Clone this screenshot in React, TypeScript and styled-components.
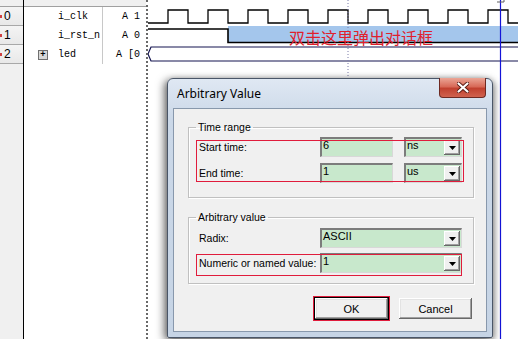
import React from 'react';
import styled, { createGlobalStyle } from 'styled-components';

const GlobalStyle = createGlobalStyle`
  html, body {
    margin: 0;
    padding: 0;
    background: #fff;
    overflow: hidden;
  }
`;

// Waveform viewer
const Page = styled.div`
  position: relative;
  display: flex;
  width: 520px;
  height: 339px;
  overflow: hidden;
  font-family: 'Liberation Sans', Arial, sans-serif;
  background: #fff;
`;

const Gutter = styled.div`
  width: 23px;
  background: #f0f0f0;
  border-right: 1px solid #000;
  display: flex;
  flex-direction: column;
`;

const Header = styled.div`
  height: 6px;
  border-bottom: 1px solid #a0a0a0;
  background: #f0f0f0;
`;

const GutterCell = styled.div`
  position: relative;
  height: 18px;
  border-bottom: 1px solid #a8a8a8;
  display: flex;
  align-items: center;
  padding-left: 4px;
  font-size: 12px;
  color: #000;
  background: linear-gradient(#f4f4f4, #e8e8e8);

  &::before {
    content: '';
    position: absolute;
    left: 0;
    top: 8px;
    width: 2px;
    height: 3px;
    background: #d04040;
  }
`;

const SignalPane = styled.div`
  width: 122px;
  display: flex;
  flex-direction: column;
`;

const SignalRow = styled.div`
  display: grid;
  grid-template-columns: 79px 43px;
  height: 19px;
  font-family: 'Liberation Mono', 'Courier New', monospace;
  font-size: 10px;
  color: #000;
`;

const NameCell = styled.div`
  display: flex;
  align-items: center;
  padding-left: 14px;
  border-right: 1px solid #c8c8c8;
  white-space: pre;
`;

const ExpandBox = styled.span`
  display: inline-flex;
  align-items: center;
  justify-content: center;
  width: 8px;
  height: 8px;
  margin-right: 10px;
  border: 1px solid #707070;
  background: #d8d8d8;
  font-family: 'Liberation Sans', sans-serif;
  font-size: 9px;
  line-height: 1;
  font-weight: bold;
`;

const Spacer = styled.span`
  width: 20px;
`;

const ValueCell = styled.div`
  display: flex;
  align-items: center;
  justify-content: flex-end;
  padding-right: 6px;
  overflow: hidden;
  white-space: pre;
`;

const WaveArea = styled.div`
  flex: 1;
  border-left: 2px dotted #686868;

  svg {
    display: block;
  }
`;

// Dialog
const Dialog = styled.div`
  position: absolute;
  left: 167px;
  top: 78px;
  width: 326px;
  height: 260px;
  box-sizing: border-box;
  display: flex;
  flex-direction: column;
  padding: 0 5px 5px;
  border: 1px solid #4a5668;
  border-radius: 6px 6px 2px 2px;
  background: linear-gradient(#dfe8f3, #cbd8e8 40px, #c6d4e5);
  box-shadow: -3px 2px 8px rgba(0, 0, 0, 0.55), 2px 2px 6px rgba(0, 0, 0, 0.35);
`;

const TitleBar = styled.div`
  position: relative;
  height: 29px;
  display: flex;
  align-items: center;
  padding-left: 4px;
  font-family: 'Noto Sans', 'Open Sans', sans-serif;
  font-size: 12px;
  color: #000;
`;

const CloseButton = styled.div`
  position: absolute;
  right: 1px;
  top: -1px;
  width: 47px;
  height: 20px;
  box-sizing: border-box;
  display: flex;
  align-items: center;
  justify-content: center;
  border: 1px solid #6e2a22;
  border-top: none;
  border-radius: 0 0 4px 4px;
  background: linear-gradient(#eba696, #d86a58 45%, #c1412f 55%, #d0624e);
`;

const Client = styled.div`
  position: relative;
  flex: 1;
  display: flex;
  flex-direction: column;
  padding: 12px 12px 0 14px;
  border: 1px solid #8898ac;
  background: #f0f0f0;
  font-size: 10.5px;
  color: #000;
`;

const GroupBox = styled.fieldset<{ $top: number; $bottom: number; $gap: number }>`
  margin: 0 0 ${(p) => p.$gap}px;
  padding: ${(p) => p.$top}px 10px ${(p) => p.$bottom}px;
  border: 1px solid #c0c0c0;
  box-shadow: inset 1px 1px 0 #fff, 1px 1px 0 #fff;
  display: grid;
  grid-template-columns: 121px 84px 58px;
  row-gap: ${(p) => (p.$top > 4 ? 5 : 6)}px;
`;

const Legend = styled.legend`
  margin-left: -3px;
  padding: 0 2px;
  font-size: 10.5px;
  line-height: 12px;
`;

const Label = styled.div`
  display: flex;
  align-items: center;
  height: 20px;
`;

const Field = styled.div<{ $span?: boolean; $width?: number }>`
  position: relative;
  width: ${(p) => (p.$width ? `${p.$width}px` : 'auto')};
  height: 20px;
  box-sizing: border-box;
  grid-column: ${(p) => (p.$span ? '2 / 4' : 'auto')};
  border-top: 2px solid #7c7c7c;
  border-left: 2px solid #7c7c7c;
  border-right: 1px solid #d8d8d8;
  border-bottom: 1px solid #d8d8d8;
  background: #c8e8cc;
  padding: 0 1px;
  font-size: 11px;
  line-height: 13px;
`;

const DropButton = styled.div`
  position: absolute;
  right: 1px;
  top: 1px;
  width: 16px;
  height: 15px;
  box-sizing: border-box;
  display: flex;
  align-items: center;
  justify-content: center;
  background: #f0f0f0;
  box-shadow: inset -1px -1px #696969, inset 1px 1px #fff, inset -2px -2px #a0a0a0;
`;

const ButtonRow = styled.div`
  display: flex;
  justify-content: flex-end;
  gap: 9px;
  padding-right: 1px;
`;

const Button = styled.div<{ $default?: boolean }>`
  width: 75px;
  height: 23px;
  box-sizing: border-box;
  display: flex;
  align-items: center;
  justify-content: center;
  background: #f0f0f0;
  border: 1px solid ${(p) => (p.$default ? '#000' : 'transparent')};
  box-shadow: inset -1px -1px #696969, inset 1px 1px #fff, inset -2px -2px #a0a0a0,
    inset 2px 2px #e3e3e3;
  font-size: 11px;
`;

const Mark = styled.div<{ $x: number; $y: number; $w: number; $h: number }>`
  position: absolute;
  left: ${(p) => p.$x}px;
  top: ${(p) => p.$y}px;
  width: ${(p) => p.$w}px;
  height: ${(p) => p.$h}px;
  box-sizing: border-box;
  border: 1px solid #e01c3c;
  pointer-events: none;
`;

const Arrow = () => (
  <svg width="7" height="4" viewBox="0 0 7 4">
    <path d="M0 0 H7 L3.5 4 Z" fill="#000" />
  </svg>
);

const Combo: React.FC<{ value: string; span?: boolean; width?: number }> = ({
  value,
  span,
  width,
}) => (
  <Field $span={span} $width={width}>
    {value}
    <DropButton>
      <Arrow />
    </DropButton>
  </Field>
);

const clockPath = () => {
  let d = 'M0 23 H20';
  for (let x = 20; x < 372; x += 40) {
    d += ` V10 H${x + 20} V23 H${x + 40}`;
  }
  return d;
};

const Waves = () => (
  <svg width="370" height="339" viewBox="0 0 370 339">
    <path d={clockPath()} fill="none" stroke="#000" strokeWidth="1.3" />
    <rect x="80" y="26" width="292" height="16" fill="#a4c6ec" />
    <path d="M0 29 H80 V42.5 H372" fill="none" stroke="#000" strokeWidth="1.6" />
    <path d="M372 47 H3 L0 54 L3 61 H372" fill="none" stroke="#141450" strokeWidth="1.2" />
    <line x1="200" y1="0" x2="200" y2="339" stroke="#7a7aa8" strokeWidth="1" strokeDasharray="1 2" />
    <line x1="352.5" y1="0" x2="352.5" y2="339" stroke="#1414d8" strokeWidth="1.2" />
    <path d="M349 2 H356 V0" fill="none" stroke="#606060" strokeWidth="1" />
    <text x="141" y="44" fill="#e0202c" fontSize="16" fontFamily="'Noto Sans CJK SC', sans-serif">
      双击这里弹出对话框
    </text>
  </svg>
);

const CloseIcon = () => (
  <svg width="12" height="11" viewBox="0 0 12 11">
    <path d="M1.5 1.5 L10.5 9.5 M10.5 1.5 L1.5 9.5" stroke="#5a1c14" strokeWidth="4" strokeLinecap="round" />
    <path d="M1.5 1.5 L10.5 9.5 M10.5 1.5 L1.5 9.5" stroke="#fff" strokeWidth="2.2" strokeLinecap="round" />
  </svg>
);

const signals = [
  { id: '0', name: 'i_clk', value: 'A 1' },
  { id: '1', name: 'i_rst_n', value: 'A 0' },
  { id: '2', name: 'led', value: 'A [0', group: true },
];

const App: React.FC = () => {
  return (
    <Page>
      <GlobalStyle />
      <Gutter>
        <Header />
        {signals.map((s) => (
          <GutterCell key={s.id}>{s.id}</GutterCell>
        ))}
      </Gutter>
      <SignalPane>
        <Header />
        {signals.map((s) => (
          <SignalRow key={s.id}>
            <NameCell>
              {s.group ? <ExpandBox>+</ExpandBox> : <Spacer />}
              {s.name}
            </NameCell>
            <ValueCell>{s.value}</ValueCell>
          </SignalRow>
        ))}
      </SignalPane>
      <WaveArea>
        <Waves />
      </WaveArea>

      <Dialog>
        <TitleBar>
          Arbitrary Value
          <CloseButton>
            <CloseIcon />
          </CloseButton>
        </TitleBar>
        <Client>
          <GroupBox $top={4} $bottom={14} $gap={13}>
            <Legend>Time range</Legend>
            <Label>Start time:</Label>
            <Field $width={73}>6</Field>
            <Combo value="ns" />
            <Label>End time:</Label>
            <Field $width={73}>1</Field>
            <Combo value="us" />
          </GroupBox>
          <GroupBox $top={5} $bottom={10} $gap={13}>
            <Legend>Arbitrary value</Legend>
            <Label>Radix:</Label>
            <Combo value="ASCII" span />
            <Label>Numeric or named value:</Label>
            <Combo value="1" span />
          </GroupBox>
          <ButtonRow>
            <Button $default>OK</Button>
            <Button>Cancel</Button>
          </ButtonRow>
          <Mark $x={22} $y={31} $w={268} $h={42} />
          <Mark $x={22} $y={145} $w={266} $h={22} />
          <Mark $x={139} $y={187} $w={77} $h={25} />
        </Client>
      </Dialog>
    </Page>
  );
};

export default App;
